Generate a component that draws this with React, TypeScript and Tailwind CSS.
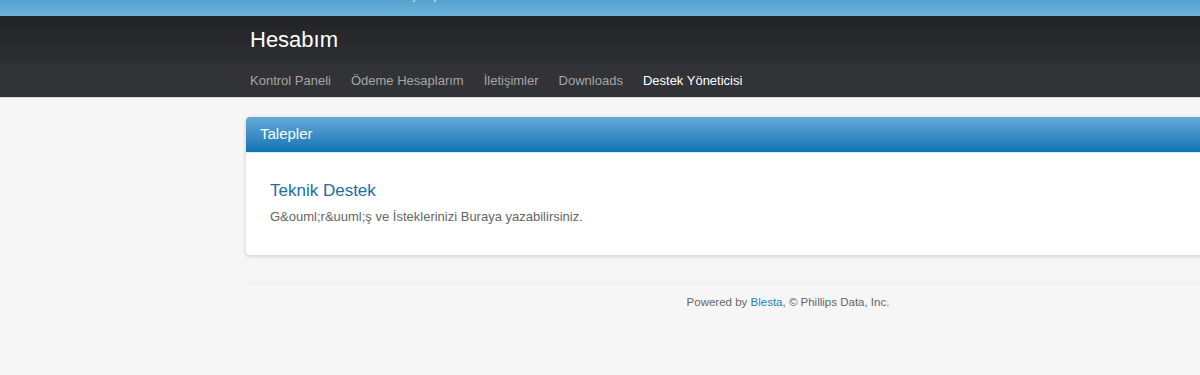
export default function App() {
  const nav = ["Kontrol Paneli", "Ödeme Hesaplarım", "İletişimler", "Downloads", "Destek Yöneticisi"];

  return (
    <div className="min-h-[375px] w-[1200px] overflow-hidden bg-[#f6f6f6] font-['Liberation_Sans',Arial,sans-serif]">
      {/* top strip */}
      <div className="h-4 overflow-hidden bg-gradient-to-b from-[#55a3cf] to-[#6cb2da]">
        <div className="-mt-[11px] pl-[392px] text-[12px] leading-[12px] text-white/80">Giriş Yap · Hesabım</div>
      </div>

      {/* header */}
      <div className="bg-gradient-to-b from-[#222428] to-[#2d2e32]">
        <div className="flex h-12 items-center pl-[250px] pb-[2px]">
          <span className="text-[22px] text-white">Hesabım</span>
        </div>
      </div>
      <div className="h-[34px] border-b border-[#d9d9d9] bg-[#323337]">
        <ul className="flex h-full items-center gap-[20px] pl-[250px] text-[13px]">
          {nav.map((item, i) => (
            <li key={item} className={i === nav.length - 1 ? "text-white" : "text-[#a6a6a6]"}>
              {item}
            </li>
          ))}
        </ul>
      </div>

      {/* content */}
      <div className="ml-[246px] w-[1084px] pt-[19px]">
        <div className="overflow-hidden rounded-[4px] bg-white shadow-[0_1px_4px_rgba(0,0,0,0.18)]">
          <div className="flex h-9 items-center border-b border-[#d8f0fb] bg-gradient-to-b from-[#62a9d9] to-[#0b73b4] pl-[14px] text-[15px] text-white">
            Talepler
          </div>
          <div className="px-6 pt-[28px] pb-[30px]">
            <h3 className="text-[17px] leading-[20px] text-[#1b6fa1]">Teknik Destek</h3>
            <p className="mt-[8px] text-[13px] leading-[16px] text-[#666]">
              G&amp;ouml;r&amp;uuml;ş ve İsteklerinizi Buraya yazabilirsiniz.
            </p>
          </div>
        </div>

        <div className="mt-[28px] border-t border-[#ececec] pt-[10px] text-center text-[11.5px] text-[#666]">
          Powered by <span className="text-[#2a7fb8]">Blesta</span>, © Phillips Data, Inc.
        </div>
      </div>
    </div>
  );
}
